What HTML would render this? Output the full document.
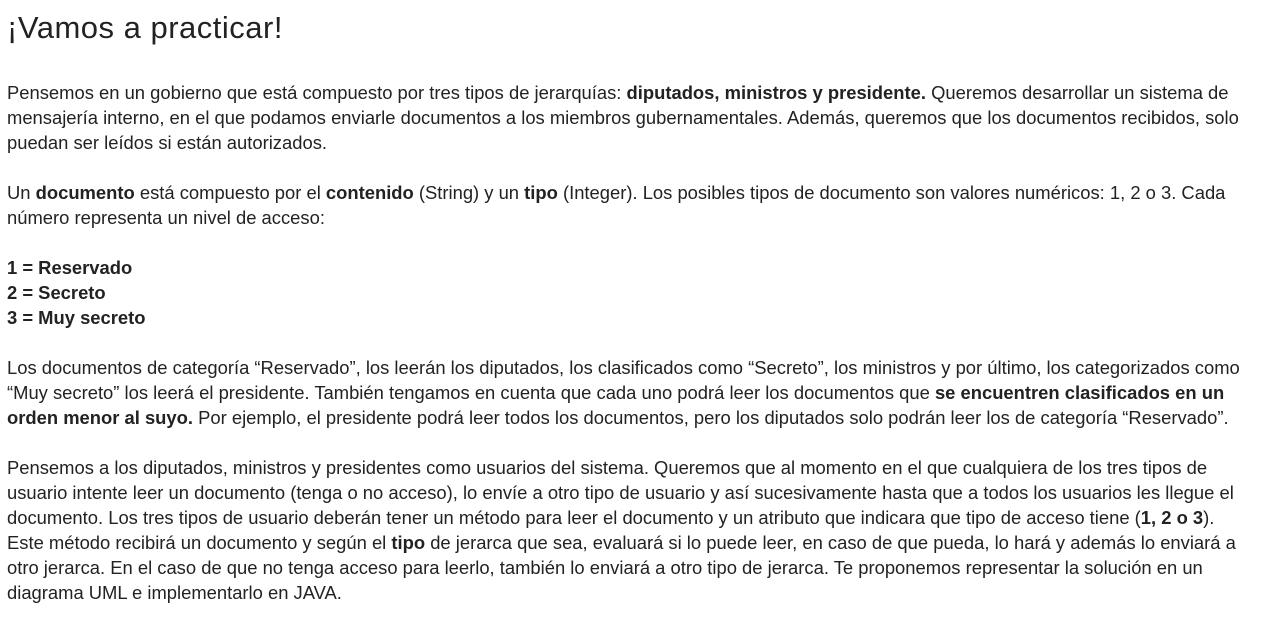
<!DOCTYPE html>
<html><head><meta charset="utf-8"><style>
body{margin:0;width:1276px;height:620px;background:#fff;overflow:hidden;font-family:"Liberation Sans",sans-serif;color:#222;}
h1{position:absolute;left:7px;top:8px;margin:0;font-weight:normal;font-size:31px;letter-spacing:0.5px;line-height:40px;color:#222;}
.t{position:absolute;left:7px;top:80px;font-size:18.4px;line-height:25px;white-space:nowrap;}
.t div{height:25px;}
b{font-weight:bold;}
</style></head><body>
<h1>¡Vamos a practicar!</h1>
<div class="t">
<div>Pensemos en un gobierno que está compuesto por tres tipos de jerarquías: <b>diputados, ministros y presidente.</b> Queremos desarrollar un sistema de</div>
<div>mensajería interno, en el que podamos enviarle documentos a los miembros gubernamentales. Además, queremos que los documentos recibidos, solo</div>
<div>puedan ser leídos si están autorizados.</div>
<div></div>
<div>Un <b>documento</b> está compuesto por el <b>contenido</b> (String) y un <b>tipo</b> (Integer). Los posibles tipos de documento son valores numéricos: 1, 2 o 3. Cada</div>
<div>número representa un nivel de acceso:</div>
<div></div>
<div><b>1 = Reservado</b></div>
<div><b>2 = Secreto</b></div>
<div><b>3 = Muy secreto</b></div>
<div></div>
<div>Los documentos de categoría “Reservado”, los leerán los diputados, los clasificados como “Secreto”, los ministros y por último, los categorizados como</div>
<div>“Muy secreto” los leerá el presidente. También tengamos en cuenta que cada uno podrá leer los documentos que <b>se encuentren clasificados en un</b></div>
<div><b>orden menor al suyo.</b> Por ejemplo, el presidente podrá leer todos los documentos, pero los diputados solo podrán leer los de categoría “Reservado”.</div>
<div></div>
<div>Pensemos a los diputados, ministros y presidentes como usuarios del sistema. Queremos que al momento en el que cualquiera de los tres tipos de</div>
<div>usuario intente leer un documento (tenga o no acceso), lo envíe a otro tipo de usuario y así sucesivamente hasta que a todos los usuarios les llegue el</div>
<div>documento. Los tres tipos de usuario deberán tener un método para leer el documento y un atributo que indicara que tipo de acceso tiene (<b>1, 2 o 3</b>).</div>
<div>Este método recibirá un documento y según el <b>tipo</b> de jerarca que sea, evaluará si lo puede leer, en caso de que pueda, lo hará y además lo enviará a</div>
<div>otro jerarca. En el caso de que no tenga acceso para leerlo, también lo enviará a otro tipo de jerarca. Te proponemos representar la solución en un</div>
<div>diagrama UML e implementarlo en JAVA.</div>
</div>
</body></html>
